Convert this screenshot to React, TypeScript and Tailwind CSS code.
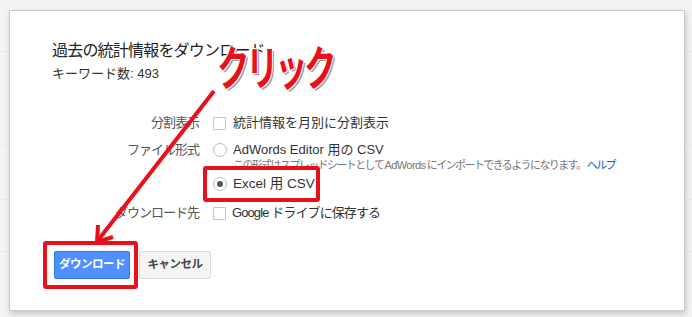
import React from "react";

const jp = { fontFamily: '"Liberation Sans", "Noto Sans CJK JP", sans-serif' };

function Checkbox() {
  return <span className="inline-block w-[13px] h-[13px] border border-[#c6c6c6] rounded-[1px] bg-white" />;
}

function Radio({ checked }: { checked?: boolean }) {
  return (
    <span className="w-[14px] h-[14px] rounded-full border border-[#bdbdbd] bg-white flex items-center justify-center">
      {checked && <span className="w-[6px] h-[6px] rounded-full bg-[#555]" />}
    </span>
  );
}

function Row({ label, children, h = "h-[20px]", mt }: { label: string; children: React.ReactNode; h?: string; mt: string }) {
  return (
    <div className={`flex items-center ${h} ${mt}`}>
      <div className="w-[148px] text-right text-[13px] text-[#555] tracking-[-1px] pr-[1px]">{label}</div>
      <div className="ml-[13px] flex items-center gap-[5px] text-[13px] text-[#333]">{children}</div>
    </div>
  );
}

export default function App() {
  return (
    <div className="relative w-[692px] h-[317px] overflow-hidden bg-[#f3f3f3]" style={jp}>
      {/* faint page behind the dialog */}
      <div className="absolute left-0 top-0 w-[9px] h-full flex flex-col">
        <div className="h-[52px] border-b border-[#e6e6e6]" />
        <div className="h-[94px] border-b border-[#e8e8e8]" />
        <div className="h-[54px] border-b border-[#e8e8e8]" />
        <div className="h-[52px] border-b border-[#e6e6e6]" />
      </div>
      <div className="absolute right-0 top-0 w-[7px] h-full flex flex-col">
        <div className="h-[52px] border-b border-[#e6e6e6]" />
        <div className="h-[94px] border-b border-[#e8e8e8]" />
        <div className="h-[54px] border-b border-[#e8e8e8]" />
        <div className="h-[52px] border-b border-[#e6e6e6]" />
      </div>

      <div className="pt-[10px] pl-[9px]">
        <div className="w-[676px] h-[301px] bg-white border border-[#c8c8c8] shadow-[1px_3px_6px_rgba(0,0,0,0.18)] pl-[42px] pt-[30px]">
          <div className="text-[16px] leading-[20px] text-[#222] tracking-[-0.8px]">過去の統計情報をダウンロード</div>
          <div className="mt-[4px] text-[13px] leading-[18px] text-[#333]">キーワード数: 493</div>

          <Row label="分割表示" mt="mt-[30px]">
            <Checkbox />
            <span className="ml-[2px]">統計情報を月別に分割表示</span>
          </Row>
          <Row label="ファイル形式" mt="mt-[8px]" h="h-[18px]">
            <Radio />
            <span className="ml-[1px] text-[13px]">AdWords Editor 用の CSV</span>
          </Row>
          <div className="ml-[181px] -mt-[1px] h-[14px] text-[11px] leading-[14px] text-[#777] tracking-[-1.6px] whitespace-nowrap">
            この形式はスプレッドシートとして <span className="tracking-[-0.6px]">AdWords</span> にインポートできるようになります。 <span className="text-[#15c]">ヘルプ</span>
          </div>
          <Row label="" mt="mt-[2px]">
            <Radio checked />
            <span className="ml-[1px] text-[13.5px]">Excel 用 CSV</span>
          </Row>
          <Row label="ダウンロード先" mt="mt-[9px]">
            <Checkbox />
            <span className="ml-[1px] tracking-[-0.9px]">Google ドライブに保存する</span>
          </Row>

          <div className="mt-[28px] ml-[2px] flex gap-[9px]">
            <button className="w-[76px] h-[28px] rounded-[2px] bg-[#4d90fe] border border-[#3079ed] text-white text-[11.5px] font-bold tracking-[-0.5px]">
              ダウンロード
            </button>
            <button className="w-[72px] h-[28px] rounded-[2px] bg-[#f5f5f5] border border-[#dcdcdc] text-[#444] text-[11.5px] font-bold tracking-[-0.5px]">
              キャンセル
            </button>
          </div>
        </div>
      </div>

      {/* annotations */}
      <div className="absolute left-[203px] top-[166px] w-[117px] h-[36px] border-4 border-[#e8101a] rounded-[3px]" />
      <div className="absolute left-[43px] top-[241px] w-[95px] h-[48px] border-4 border-[#e8101a] rounded-[3px]" />
      <svg className="absolute inset-0 pointer-events-none" width="692" height="317">
        <line x1="214" y1="91" x2="99" y2="239" stroke="#e8101a" strokeWidth="4" />
        <polyline points="98,225 97,242 113,237" fill="none" stroke="#e8101a" strokeWidth="4" strokeLinejoin="miter" />
      </svg>
      <div
        className="absolute left-[217px] top-[45px] text-[47px] font-bold leading-[48px] text-[#e8101a] tracking-[-5px] origin-left scale-x-[0.69]"
        style={{ textShadow: "1px 1px 0 #fff, -1px -1px 0 #fff, 1px -1px 0 #fff, -1px 1px 0 #fff, 3px 2px 0 #999" }}
      >
        クリック
      </div>
    </div>
  );
}
